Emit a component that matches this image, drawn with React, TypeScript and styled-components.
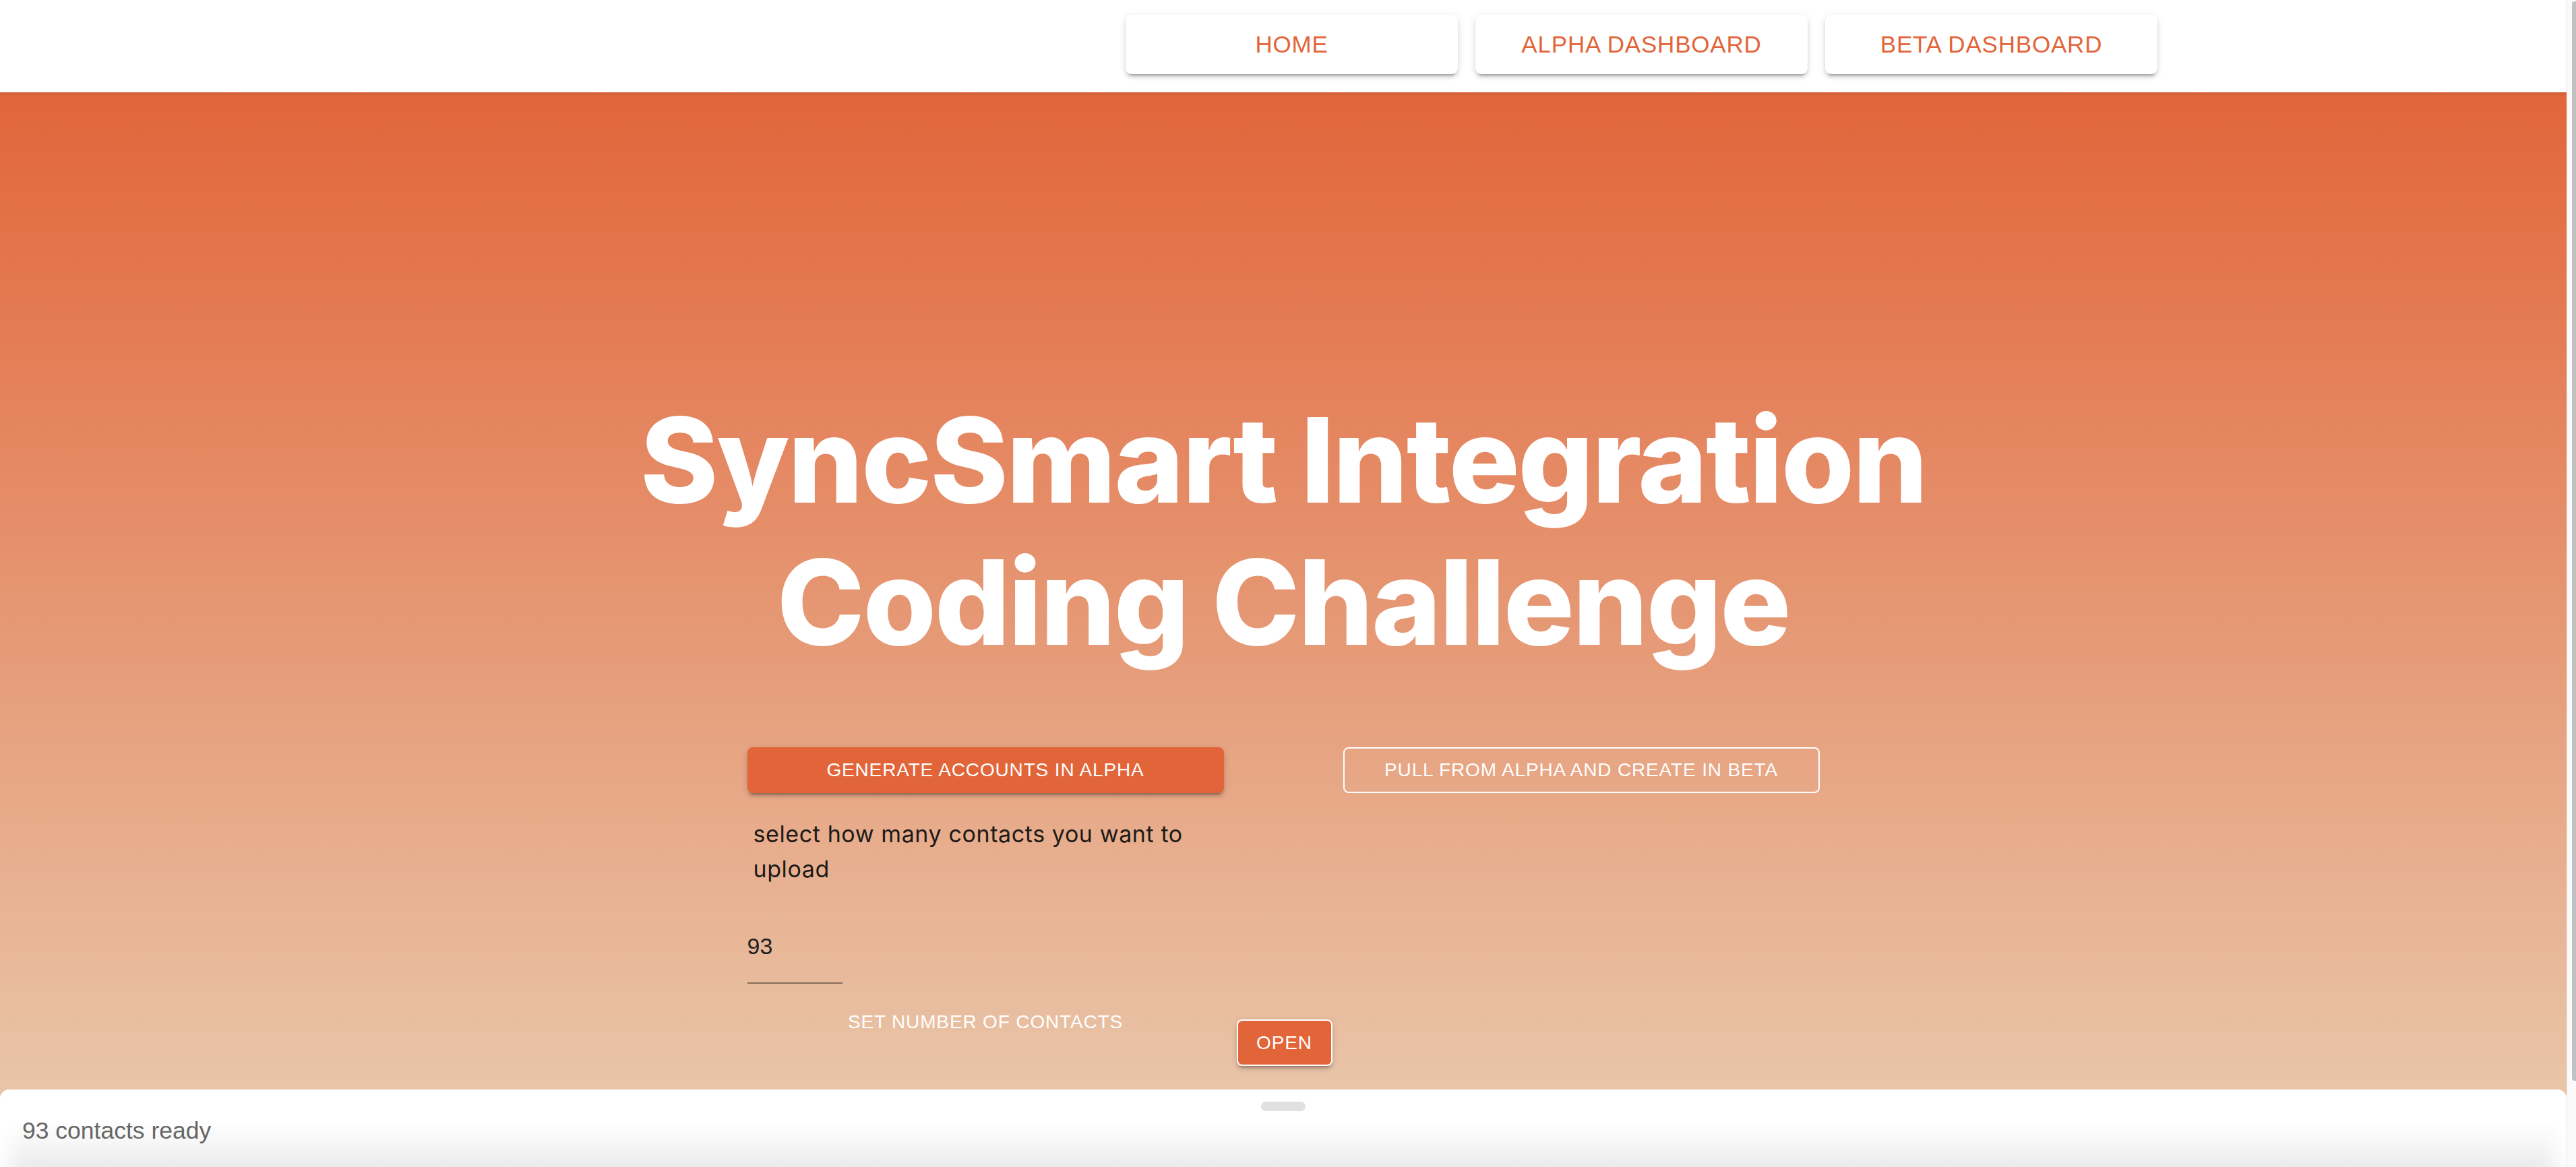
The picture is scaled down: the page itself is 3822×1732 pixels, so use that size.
import React from "react";
import styled, { createGlobalStyle } from "styled-components";

const ORANGE = "#e2653a";

const GlobalStyle = createGlobalStyle`
  html, body {
    margin: 0;
    padding: 0;
    overflow: hidden;
  }
  body {
    font-family: "Liberation Sans", Arial, sans-serif;
    background: #ffffff;
  }
`;

const Shell = styled.div`
  display: flex;
  height: 100vh;
  overflow: hidden;
`;

const Viewport = styled.div`
  position: relative;
  flex: 1;
  min-width: 0;
  height: 100%;
  overflow: hidden;
`;

const ScrollTrack = styled.div`
  flex: 0 0 14px;
  box-sizing: border-box;
  height: 100%;
  padding: 2px 0 0 7px;
  background: #fafafa;
  border-left: 1px solid #e6e6e6;
`;

const ScrollThumb = styled.div`
  width: 6px;
  height: 1602px;
  border-radius: 4px 0 0 4px;
  background: #c1c1c1;
`;

const Header = styled.header`
  position: relative;
  z-index: 2;
  height: 137px;
  box-sizing: border-box;
  background: #ffffff;
  display: flex;
  align-items: flex-start;
  gap: 26px;
  padding: 22px 0 0 1670px;
  box-shadow: 0 2px 4px rgba(0, 0, 0, 0.1);
`;

const NavButton = styled.button`
  width: 493px;
  height: 88px;
  border: none;
  border-radius: 9px;
  background: #ffffff;
  color: ${ORANGE};
  font-family: "Liberation Sans", Arial, sans-serif;
  font-size: 35px;
  letter-spacing: 0.8px;
  text-transform: uppercase;
  cursor: pointer;
  box-shadow: 0 7px 3px -5px rgba(0, 0, 0, 0.22), 0 5px 5px 0 rgba(0, 0, 0, 0.12),
    0 2px 12px 0 rgba(0, 0, 0, 0.1);
`;

const Hero = styled.main`
  min-height: 1733px;
  box-sizing: border-box;
  padding-top: 440px;
  background: linear-gradient(180deg, #e2653a 0px, #e9c5a8 1480px, #eacbb0 1733px);
  display: flex;
  flex-direction: column;
  align-items: center;
`;

const Title = styled.h1`
  margin: 0;
  color: #ffffff;
  font-family: Inter, "Liberation Sans", sans-serif;
  font-weight: 800;
  font-size: 175px;
  line-height: 211px;
  letter-spacing: -2.2px;
  text-align: center;
`;

const TitleLine = styled.span`
  display: block;
  white-space: nowrap;
`;

const Actions = styled.div`
  margin-top: 110px;
  display: grid;
  grid-template-columns: 707px 707px;
  column-gap: 177px;
  align-items: start;
`;

const Column = styled.div`
  display: flex;
  flex-direction: column;
  align-items: flex-start;
`;

const BaseButton = styled.button`
  box-sizing: border-box;
  height: 68px;
  border-radius: 8px;
  color: #ffffff;
  font-family: "Liberation Sans", Arial, sans-serif;
  font-size: 28px;
  letter-spacing: 0.85px;
  text-transform: uppercase;
  cursor: pointer;
`;

const ContainedButton = styled(BaseButton)`
  width: 100%;
  border: none;
  background: ${ORANGE};
  box-shadow: 0 7px 3px -5px rgba(0, 0, 0, 0.25), 0 5px 5px 0 rgba(0, 0, 0, 0.14),
    0 2px 12px 0 rgba(0, 0, 0, 0.1);
`;

const OutlinedButton = styled(BaseButton)`
  width: 100%;
  border: 2px solid #ffffff;
  background: transparent;
`;

const TextButton = styled(BaseButton)`
  flex: 0 0 100%;
  border: none;
  background: transparent;
`;

const OpenButton = styled(BaseButton)`
  flex: none;
  width: 142px;
  height: 69px;
  margin: 30px 0 0 19px;
  border: 2px solid #ffffff;
  background: ${ORANGE};
  box-shadow: 0 7px 3px -5px rgba(0, 0, 0, 0.22), 0 5px 5px 0 rgba(0, 0, 0, 0.12),
    0 2px 12px 0 rgba(0, 0, 0, 0.1);
`;

const Prompt = styled.p`
  margin: 35px 0 0;
  padding-left: 9px;
  box-sizing: border-box;
  width: 100%;
  color: #1d1a17;
  font-family: Inter, "Liberation Sans", sans-serif;
  font-size: 34px;
  line-height: 52px;
  letter-spacing: 0.6px;
`;

const CountInput = styled.input`
  margin-top: 60px;
  width: 141px;
  height: 40px;
  padding: 8px 0 34px;
  border: none;
  border-bottom: 2px solid rgba(0, 0, 0, 0.42);
  background: transparent;
  color: #1f1f1f;
  font-family: "Liberation Sans", Arial, sans-serif;
  font-size: 34px;
  line-height: 40px;
  outline: none;
`;

const SetRow = styled.div`
  margin-top: 23px;
  width: 100%;
  display: flex;
  align-items: flex-start;
`;

const Sheet = styled.footer`
  position: absolute;
  left: 0;
  right: 0;
  bottom: 0;
  z-index: 10;
  height: 115px;
  box-sizing: border-box;
  padding-top: 18px;
  border-radius: 14px 14px 0 0;
  background: linear-gradient(180deg, #ffffff 0%, #ffffff 40%, #f6f6f6 70%, #ebebeb 100%);
  box-shadow: inset 40px 0 30px -24px #ffffff, inset -40px 0 30px -24px #ffffff;
`;

const Puller = styled.div`
  width: 66px;
  height: 14px;
  margin: 0 auto;
  border-radius: 7px;
  background: #e0e0e0;
`;

const Status = styled.div`
  margin: 9px 0 0 33px;
  color: #666666;
  font-family: "Liberation Sans", Arial, sans-serif;
  font-size: 35.5px;
`;

export default function App() {
  const [count, setCount] = React.useState("93");
  return (
    <>
      <GlobalStyle />
      <Shell>
        <Viewport>
          <Header>
            <NavButton>Home</NavButton>
            <NavButton>Alpha Dashboard</NavButton>
            <NavButton>Beta Dashboard</NavButton>
          </Header>
          <Hero>
            <Title>
              <TitleLine>SyncSmart Integration</TitleLine>
              <TitleLine>Coding Challenge</TitleLine>
            </Title>
            <Actions>
              <Column>
                <ContainedButton>Generate Accounts in Alpha</ContainedButton>
                <Prompt>select how many contacts you want to upload</Prompt>
                <CountInput value={count} onChange={(e) => setCount(e.target.value)} />
                <SetRow>
                  <TextButton>Set Number of Contacts</TextButton>
                  <OpenButton>Open</OpenButton>
                </SetRow>
              </Column>
              <Column>
                <OutlinedButton>Pull from Alpha and Create in Beta</OutlinedButton>
              </Column>
            </Actions>
          </Hero>
          <Sheet>
            <Puller />
            <Status>{count} contacts ready</Status>
          </Sheet>
        </Viewport>
        <ScrollTrack>
          <ScrollThumb />
        </ScrollTrack>
      </Shell>
    </>
  );
}
